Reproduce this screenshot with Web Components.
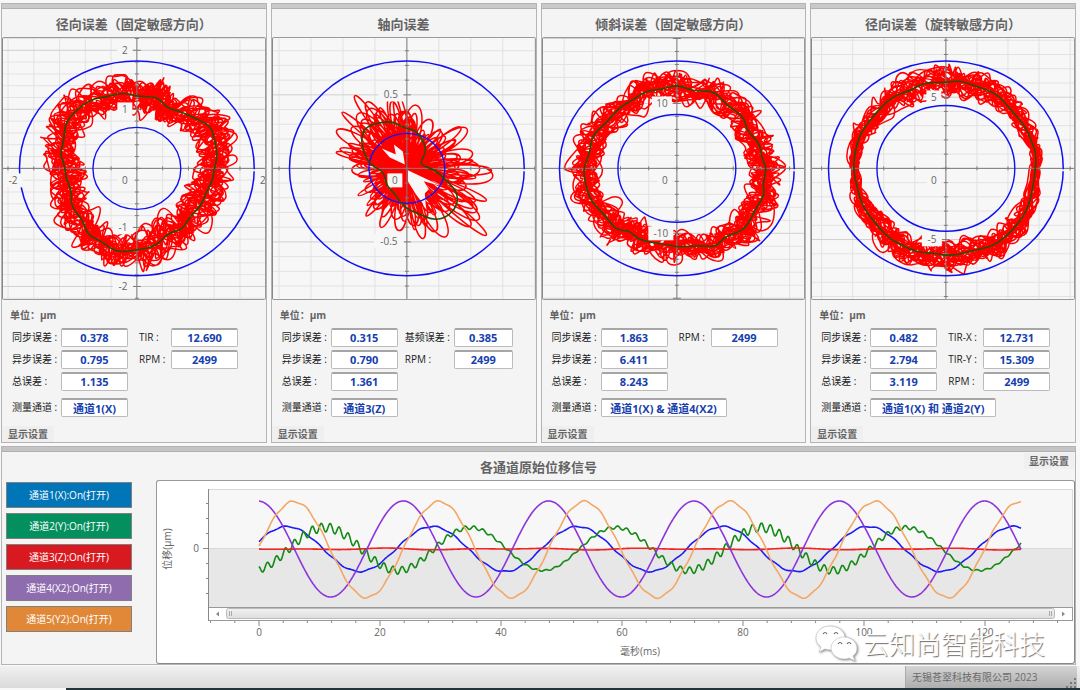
<!DOCTYPE html>
<html lang="zh-CN">
<head>
<meta charset="utf-8">
<meta name="viewport" content="width=device-width, initial-scale=1">
<title>各通道原始位移信号</title>
<style>
    body {
        margin: 0;
        background: #f8f8f8;
        color: #333;
        font: 10px/14px "Open Sans", "Noto Sans CJK SC", sans-serif;
    }
    main {
        padding: 3px 4px 0 1px;
    }
    .panels {
        display: grid;
        grid-template-columns: repeat(4, minmax(0, 1fr));
        gap: 4px;
        margin-bottom: 3px;
    }
    .row {
        display: flex;
        height: 19px;
    }
    .row.channel {
        margin-top: 4px;
    }
</style>
</head>
<body>
<main>
    <div class="panels">
        <error-panel heading="径向误差（固定敏感方向）">
            <polar-plot slot="plot" kind="radial"></polar-plot>
            <div class="row"><value-field label="同步误差 :" value="0.378"></value-field><value-field label="TIR :" value="12.690" second></value-field></div>
            <div class="row"><value-field label="异步误差 :" value="0.795"></value-field><value-field label="RPM :" value="2499" second></value-field></div>
            <div class="row"><value-field label="总误差 :" value="1.135"></value-field></div>
            <div class="row channel"><value-field label="测量通道 :" value="通道1(X)"></value-field></div>
        </error-panel>
        <error-panel heading="轴向误差" style="--second-label: 56px; --second-gap: 7px; --second-box: 59px">
            <polar-plot slot="plot" kind="axial"></polar-plot>
            <div class="row"><value-field label="同步误差 :" value="0.315"></value-field><value-field label="基频误差 :" value="0.385" second></value-field></div>
            <div class="row"><value-field label="异步误差 :" value="0.790"></value-field><value-field label="RPM :" value="2499" second></value-field></div>
            <div class="row"><value-field label="总误差 :" value="1.361"></value-field></div>
            <div class="row channel"><value-field label="测量通道 :" value="通道3(Z)"></value-field></div>
        </error-panel>
        <error-panel heading="倾斜误差（固定敏感方向）">
            <polar-plot slot="plot" kind="tilt"></polar-plot>
            <div class="row"><value-field label="同步误差 :" value="1.863"></value-field><value-field label="RPM :" value="2499" second></value-field></div>
            <div class="row"><value-field label="异步误差 :" value="6.411"></value-field></div>
            <div class="row"><value-field label="总误差 :" value="8.243"></value-field></div>
            <div class="row channel"><value-field label="测量通道 :" value="通道1(X) &amp; 通道4(X2)" wide></value-field></div>
        </error-panel>
        <error-panel heading="径向误差（旋转敏感方向）" style="--second-label: 46px">
            <polar-plot slot="plot" kind="rotating"></polar-plot>
            <div class="row"><value-field label="同步误差 :" value="0.482"></value-field><value-field label="TIR-X :" value="12.731" second></value-field></div>
            <div class="row"><value-field label="异步误差 :" value="2.794"></value-field><value-field label="TIR-Y :" value="15.309" second></value-field></div>
            <div class="row"><value-field label="总误差 :" value="3.119"></value-field><value-field label="RPM :" value="2499" second></value-field></div>
            <div class="row channel"><value-field label="测量通道 :" value="通道1(X) 和 通道2(Y)" wide></value-field></div>
        </error-panel>
    </div>
    <signal-panel heading="各通道原始位移信号">
        <channel-button slot="channels" style="--fill: #0075b8">通道1(X):On(打开)</channel-button>
        <channel-button slot="channels" style="--fill: #048f5f">通道2(Y):On(打开)</channel-button>
        <channel-button slot="channels" style="--fill: #d91920">通道3(Z):On(打开)</channel-button>
        <channel-button slot="channels" style="--fill: #8e6cae">通道4(X2):On(打开)</channel-button>
        <channel-button slot="channels" style="--fill: #e08838">通道5(Y2):On(打开)</channel-button>
        <wave-plot></wave-plot>
        <brand-mark slot="brand">云知尚智能科技</brand-mark>
    </signal-panel>
</main>
<status-bar>无锡苍翠科技有限公司 2023</status-bar>

<script>
    // Small repeatable generator, so the traces look the same on every load
    function seeded(seed) {
        return () => {
            seed = (seed * 1664525 + 1013904223) % 4294967296;
            return seed / 4294967296;
        };
    }

    // Closed smooth path through the middle of each segment
    function smoothPath(points) {
        const mid = (a, b) => [(a[0] + b[0]) / 2, (a[1] + b[1]) / 2];
        const f = p => p[0].toFixed(1) + ' ' + p[1].toFixed(1);
        const n = points.length;
        let d = 'M' + f(mid(points[n - 1], points[0]));
        points.forEach((p, i) => {
            d += 'Q' + f(p) + ' ' + f(mid(p, points[(i + 1) % n]));
        });
        return d + 'Z';
    }

    // Point at u (0..1) along a closed outline
    function pointAt(outline, u) {
        const n = outline.length;
        const t = (((u % 1) + 1) % 1) * n;
        const a = outline[Math.floor(t) % n];
        const b = outline[(Math.floor(t) + 1) % n];
        const k = t - Math.floor(t);
        return [a[0] + (b[0] - a[0]) * k, a[1] + (b[1] - a[1]) * k];
    }

    const PLOTS = {
        radial: {
            seed: 11, inner: [44, 41], stepX: 25.8, stepY: 11.82, every: 5, amp: 29,
            labels: [['2', -12, -118], ['1', -12, -59], ['0', -12, 12], ['-1', -14, 59], ['-2', -14, 118], ['-2', -124, 12], ['2', 126, 12]],
            mean: [[0,-72],[16,-72],[23,-69],[31,-60],[44,-57],[59,-50],[74,-42],[77,-32],[81,-13],[77,2],[76,12],[69,25],[64,38],[53,48],[46,61],[31,65],[19,78],[0,82],[-21,84],[-37,72],[-49,67],[-54,52],[-66,38],[-65,23],[-71,10],[-72,-2],[-77,-15],[-73,-27],[-72,-45],[-62,-57],[-47,-69],[-29,-72],[-14,-76]]
        },
        axial: {
            seed: 7, inner: [38, 35], stepX: 32, stepY: 14.72, every: 5,
            labels: [['0.5', -16, -74], ['0', -12, 12], ['-0.5', -18, 73]],
            mean: [[0,-40],[9,-38],[15,-30],[20,-18],[14,-7],[15,-3],[27,1],[40,12],[51,25],[50,38],[40,49],[27,52],[10,45],[-1,40],[-8,32],[-13,24],[-20,18],[-23,3],[-36,-3],[-43,-15],[-46,-30],[-41,-42],[-26,-46],[-15,-47],[-5,-42]],
            outer: [[0,-58],[10,-68],[24,-52],[64,-47],[60,-22],[97,2],[77,22],[94,67],[50,70],[24,75],[-3,65],[-16,65],[-36,57],[-45,43],[-53,15],[-61,-5],[-80,-25],[-68,-48],[-65,-60],[-49,-79],[-23,-58],[-14,-85]]
        },
        tilt: {
            seed: 23, inner: [59, 54], stepX: 28.2, stepY: 13, every: 5, amp: 25,
            labels: [['10', -15, -65], ['0', -12, 12], ['-10', -16, 65]],
            mean: [[0,-84],[17,-77],[37,-78],[50,-63],[67,-52],[70,-38],[83,-25],[85,-10],[90,0],[86,15],[88,27],[80,38],[72,55],[64,63],[47,69],[39,79],[22,77],[2,79],[-11,76],[-28,74],[-40,70],[-48,62],[-61,62],[-71,48],[-86,33],[-91,18],[-94,0],[-87,-15],[-85,-33],[-71,-45],[-58,-61],[-43,-69],[-30,-78],[-15,-79]]
        },
        rotating: {
            seed: 41, inner: [69, 63], stepX: 31.1, stepY: 14.25, every: 5, amp: 24, narrowSides: true,
            labels: [['5', -12, -71], ['0', -12, 12], ['-5', -14, 71]],
            mean: [[0,-86],[14,-88],[31,-82],[51,-75],[64,-60],[79,-43],[86,-27],[91,-13],[88,15],[83,38],[73,55],[58,70],[46,78],[28,82],[6,88],[-12,85],[-29,84],[-46,76],[-57,70],[-71,55],[-84,37],[-89,18],[-93,0],[-90,-22],[-84,-38],[-69,-57],[-52,-73],[-37,-77],[-22,-86]]
        }
    };

    class PolarPlot extends HTMLElement {
        connectedCallback() {
            const plot = PLOTS[this.getAttribute('kind')];
            this.attachShadow({ mode: 'open' });
            this.shadowRoot.innerHTML = `
                <style>
                    :host { display: block; border: 1px solid #999; border-left-color: #888; border-radius: 2px; background: #f7f7f7; overflow: hidden; }
                    svg { display: block; width: 100%; height: auto; }
                    text { font: 10px "Open Sans", "Noto Sans CJK SC", sans-serif; fill: #666; text-anchor: middle; }
                </style>
                <svg viewBox="-134 -130.5 262 261" fill="none" role="img" aria-label="${this.getAttribute('kind')}">
                    ${this.grid(plot)}
                    <g stroke="#f00" stroke-width="1.5" stroke-linejoin="round">${plot.outer ? this.petals(plot) : this.band(plot)}</g>
                    ${this.axes(plot)}
                    <ellipse rx="117.5" ry="107.5" stroke="#1010f5" stroke-width="1.5"/>
                    <path d="M115 2H120" stroke="#f7f7f7" stroke-width="2"/>
                    <ellipse rx="${plot.inner[0]}" ry="${plot.inner[1]}" stroke="#1010f5" stroke-width="1.4"/>
                    ${this.labels(plot)}
                    <path d="${smoothPath(plot.mean)}" stroke="#225000" stroke-width="1.6"/>
                </svg>
            `;
        }

        grid({ stepX, stepY, every }) {
            let minor = '';
            let major = '';
            for (let i = -12; i <= 12; i++) {
                minor += `M${i * stepX} -131V131`;
                if (i % every) minor += `M-135 ${i * stepY}H130`;
                else major += `M-135 ${i * stepY}H130`;
            }
            return `<path d="${minor}" stroke="#e2e2e2"/><path d="${major}" stroke="#cfcfcf"/>`;
        }

        axes({ stepX, stepY, every }) {
            let d = 'M-135 0H130M0 -131V131';
            for (let i = -12; i <= 12; i++) {
                const half = i % every ? 2 : 4;
                d += `M${i * stepX} -2V2M${-half} ${i * stepY}H${half}`;
            }
            return `<path d="${d}" stroke="#7d7d7d"/>`;
        }

        band({ seed, mean, amp, narrowSides }) {
            const rand = seeded(seed);
            const revolutions = 25;
            const perTurn = 67;
            const points = [];
            for (let i = 0; i < revolutions * perTurn; i++) {
                const [x, y] = pointAt(mean, i / perTurn + (rand() - 0.5) * 0.03);
                const r = Math.hypot(x, y);
                const size = narrowSides ? amp * (0.3 + 0.7 * Math.abs(y / r)) : amp;
                const k = 1 + (rand() + rand() - 1) * size / r;
                points.push([x * k, y * k]);
            }
            return `<path d="${smoothPath(points)}"/>`;
        }

        petals({ seed, outer }) {
            const rand = seeded(seed);
            let d = '';
            for (let i = 0; i < 190; i++) {
                const [x, y] = pointAt(outer, i / 190 + (rand() - 0.5) * 0.01);
                const reach = i % 9 ? 0.6 + rand() * 0.6 : 1.32;
                const turn = 0.1 + rand() * 0.24;
                const c = Math.cos(turn) * reach;
                const s = Math.sin(turn) * reach;
                d += `M0 0C${(x * c - y * s).toFixed(1)} ${(x * s + y * c).toFixed(1)} ${(x * c + y * s).toFixed(1)} ${(y * c - x * s).toFixed(1)} 0 0`;
            }
            // The two quiet sectors stay clear next to the centre
            return `<path d="${d}"/><path d="M-2 -4L-17 -11L-25 -20L-11 -14L-13 -24L-4 -17ZM1 2L35 18L17 13L22 21L18 25L19 39L9 26L1 13Z" fill="#f7f7f7" stroke="none"/>`;
        }

        labels({ labels }) {
            return labels.map(([text, x, y]) => {
                const w = text.length * 5 + 10;
                return `<rect x="${x - w / 2}" y="${y - 7}" width="${w}" height="14" fill="#f7f7f7"/><text x="${x}" y="${y + 4}">${text}</text>`;
            }).join('');
        }
    }

    class ErrorPanel extends HTMLElement {
        connectedCallback() {
            this.attachShadow({ mode: 'open' });
            this.shadowRoot.innerHTML = `
                <style>
                    :host { display: flex; flex-direction: column; box-sizing: border-box; border: 1px solid #b4b4b4; background: #f4f4f4; }
                    .bar { height: 4px; background: #c9c9c9; border-bottom: 1px solid #b0b0b0; }
                    h2 { margin: 0; padding: 6px 0 4px; font-size: 13px; line-height: 18px; text-align: center; color: #636363; }
                    h3 { margin: 0; padding: 8px 8px 0; font-size: 10px; line-height: 14px; color: #636363; }
                    .fields { display: flex; flex-direction: column; gap: 3px; padding: 6px 0 9px 10px; }
                    button { align-self: flex-start; border: 0; padding: 0 6px; background: #efefef; color: #666; font: bold 10px/16px "Open Sans", "Noto Sans CJK SC", sans-serif; }
                </style>
                <div class="bar"></div>
                <h2>${this.getAttribute('heading')}</h2>
                <slot name="plot"></slot>
                <h3>单位：μm</h3>
                <div class="fields"><slot></slot></div>
                <button type="button">显示设置</button>
            `;
        }
    }

    class ValueField extends HTMLElement {
        connectedCallback() {
            this.attachShadow({ mode: 'open' });
            this.shadowRoot.innerHTML = `
                <style>
                    :host { display: flex; align-items: center; }
                    label { box-sizing: border-box; width: 49px; white-space: nowrap; color: #222; }
                    input { box-sizing: border-box; width: 67px; height: 19px; margin: 0; padding: 0; border: 1px solid #bbb; border-top: 2px solid #a6a6a6; border-radius: 2px; background: #fff; color: #1640ad; text-align: center; font: bold 11px/16px "Open Sans", "Noto Sans CJK SC", sans-serif; }
                    :host([wide]) input { width: 126px; }
                    :host([second]) label { width: var(--second-label, 43px); padding-left: var(--second-gap, 11px); }
                    :host([second]) input { width: var(--second-box, 67px); }
                </style>
                <label for="value">${this.getAttribute('label')}</label>
                <input id="value" type="text" readonly>
            `;
            this.shadowRoot.querySelector('input').value = this.getAttribute('value');
        }
    }

    class ChannelButton extends HTMLElement {
        connectedCallback() {
            this.attachShadow({ mode: 'open' });
            this.shadowRoot.innerHTML = `
                <style>
                    :host { display: block; }
                    button { display: block; box-sizing: border-box; width: 100%; height: 26px; padding: 0; border: 1px solid #808080; background: var(--fill); color: #fff; font: 10px/14px "Open Sans", "Noto Sans CJK SC", sans-serif; }
                </style>
                <button type="button"><slot></slot></button>
            `;
        }
    }

    class SignalPanel extends HTMLElement {
        connectedCallback() {
            this.attachShadow({ mode: 'open' });
            this.shadowRoot.innerHTML = `
                <style>
                    :host { display: block; position: relative; border: 1px solid #b4b4b4; background: #f4f4f4; }
                    .bar { height: 4px; background: #c4c4c4; border-bottom: 1px solid #b0b0b0; }
                    header { display: grid; grid-template-columns: 1fr auto 1fr; align-items: start; height: 28px; }
                    h2 { grid-column: 2; margin: 0; padding-top: 6px; font-size: 13px; line-height: 18px; color: #636363; }
                    header button { justify-self: end; margin: 1px 1px 0 0; border: 0; padding: 0 5px; background: #efefef; color: #666; font: bold 10px/16px "Open Sans", "Noto Sans CJK SC", sans-serif; }
                    .content { display: grid; grid-template-columns: 126px minmax(0, 1fr); gap: 24px; padding: 0 0 0 4px; }
                    .channels { display: flex; flex-direction: column; gap: 5px; padding-top: 2px; }
                    .brand { position: absolute; right: 30px; bottom: 2px; }
                </style>
                <div class="bar"></div>
                <header><h2>${this.getAttribute('heading')}</h2><button type="button">显示设置</button></header>
                <div class="content">
                    <div class="channels"><slot name="channels"></slot></div>
                    <slot></slot>
                </div>
                <div class="brand"><slot name="brand"></slot></div>
            `;
        }
    }

    class WavePlot extends HTMLElement {
        connectedCallback() {
            this.attachShadow({ mode: 'open' });
            this.shadowRoot.innerHTML = `
                <style>
                    :host { display: block; border: 1px solid #999; border-bottom-color: #888; border-right-color: #888; border-radius: 3px; background: #fff; }
                    svg { display: block; width: 100%; height: auto; }
                    text { font: 10px "Open Sans", "Noto Sans CJK SC", sans-serif; fill: #666; text-anchor: middle; }
                </style>
                <svg viewBox="157 481 917 182" fill="none" role="img" aria-label="位移(μm)">
                    <defs>
                        <linearGradient id="thumb" x2="0" y2="1"><stop stop-color="#f2f2f2"/><stop offset="1" stop-color="#dedede"/></linearGradient>
                    </defs>
                    <rect x="208" y="489" width="864" height="60" fill="#f7f7f7"/>
                    <rect x="208" y="548" width="864" height="59" fill="#e7e7e7"/>
                    <path d="M208 489.5H1072.500V607M208 548.500H1072" stroke="#d8d8d8"/>
                    <g stroke-width="1.6" stroke-linejoin="round">
                        ${this.curve('#1c1cf5', x => 549 - 22.5 * this.wave(x, 287) + 0.6 * Math.sin(x / 2.7))}
                        ${this.curve('#138a13', x => 549 - 21.5 * this.wave(x, 325) + (2.7 + 1.9 * Math.cos((x - 330) / 70)) * Math.sin(x / 1.43))}
                        ${this.curve('#f52222', x => 549 + 0.5 * Math.sin(x / 13) + 0.5 * Math.sin(x / 22))}
                        ${this.curve('#8d35dc', x => 549 - 48 * this.wave(x, 258))}
                        ${this.curve('#f4a664', x => 549.5 - 48 * this.wave(x, 294) + 0.9 * Math.sin(x / 2.6))}
                    </g>
                    <rect x="208.500" y="607.500" width="864" height="13" fill="#fff" stroke="#999"/>
                    <rect x="226.500" y="608.500" width="828" height="10" rx="2" fill="url(#thumb)" stroke="#bbb"/>
                    <path d="M229.500 611V616M231.500 611V616M1049.500 611V616M1051.500 611V616" stroke="#aaa"/>
                    <path d="M219 611.500V616.500L216 614ZM1062 611.500V616.500L1065 614Z" fill="#888"/>
                    <path d="${this.ticks()}" stroke="#888"/>
                    <text x="196" y="552">0</text>
                    <text transform="translate(171 549) rotate(-90)">位移(μm)</text>
                    ${[0, 20, 40, 60, 80, 100, 120].map(ms => `<text x="${259 + ms * 6.05}" y="636">${ms}</text>`).join('')}
                    <text x="640" y="655">毫秒(ms)</text>
                </svg>
            `;
        }

        wave(x, peak) {
            return Math.cos((x - peak) / 145.3 * 2 * Math.PI);
        }

        curve(color, y) {
            let d = '';
            for (let x = 259; x <= 1021; x++) d += `${d ? 'L' : 'M'}${x} ${y(x).toFixed(1)}`;
            return `<path d="${d}" stroke="${color}"/>`;
        }

        ticks() {
            let d = 'M208.500 489V621M203 548.500H208';
            for (let i = -3; i <= 3; i++) d += `M206 ${548.5 + i * 15}H208`;
            for (let i = -2; i <= 33; i++) d += `M${259 + i * 24.2} 621V${i % 5 ? 623 : 626}`;
            return d;
        }
    }

    class BrandMark extends HTMLElement {
        connectedCallback() {
            this.attachShadow({ mode: 'open' });
            this.shadowRoot.innerHTML = `
                <style>
                    :host { display: flex; align-items: center; gap: 5px; color: #fff; font: 300 26px/38px "Noto Sans CJK SC", sans-serif; text-shadow: 1px 1px 1px #666; }
                    svg { filter: drop-shadow(1px 1px 1px #888); }
                </style>
                <svg width="44" height="38" viewBox="0 0 44 38" fill="#fff" stroke="#bbb" stroke-width=".6">
                    <path d="M16 2C8 2 2 7 2 14c0 4 2 7 5 9l-2 5 6-3c2 .7 4 1 6 1 7 0 14-5 14-12S24 2 16 2Z"/>
                    <path d="M30 13c-7 0-13 5-13 11s6 11 13 11c2 0 4-.3 5-1l6 3-2-5c3-2 4-5 4-8 0-6-6-11-13-11Z"/>
                    <path d="M9 10q2-3 4 0M20 10q2-3 4 0M24 20q2-3 4 0M33 20q2-3 4 0" fill="none" stroke="#666" stroke-width="1.200"/>
                </svg>
                <span><slot></slot></span>
            `;
        }
    }

    class StatusBar extends HTMLElement {
        connectedCallback() {
            this.attachShadow({ mode: 'open' });
            this.shadowRoot.innerHTML = `
                <style>
                    :host { display: block; }
                    footer { display: flex; justify-content: flex-end; height: 22px; padding-right: 3px; margin-top: 1px; background: linear-gradient(#f1f1f1, #dadada); }
                    .owner { display: flex; align-items: center; justify-content: space-between; box-sizing: border-box; width: 172px; padding-left: 6px; border-left: 1px solid #aaa; background: linear-gradient(#d4d4d4, #aeaeae); color: #6a6a6a; }
                    svg { align-self: flex-end; }
                    .edge { height: 2px; margin-left: 66px; background: #22333a; }
                </style>
                <footer>
                    <div class="owner">
                        <slot></slot>
                        <svg width="11" height="11" viewBox="0 0 11 11" fill="#777"><path d="M8 1h2v2H8zM8 5h2v2H8zM4 5h2v2H4zM8 9h2v2H8zM4 9h2v2H4zM0 9h2v2H0z"/></svg>
                    </div>
                </footer>
                <div class="edge"></div>
            `;
        }
    }

    customElements.define('polar-plot', PolarPlot);
    customElements.define('value-field', ValueField);
    customElements.define('error-panel', ErrorPanel);
    customElements.define('channel-button', ChannelButton);
    customElements.define('wave-plot', WavePlot);
    customElements.define('brand-mark', BrandMark);
    customElements.define('signal-panel', SignalPanel);
    customElements.define('status-bar', StatusBar);
</script>
</body>
</html>
